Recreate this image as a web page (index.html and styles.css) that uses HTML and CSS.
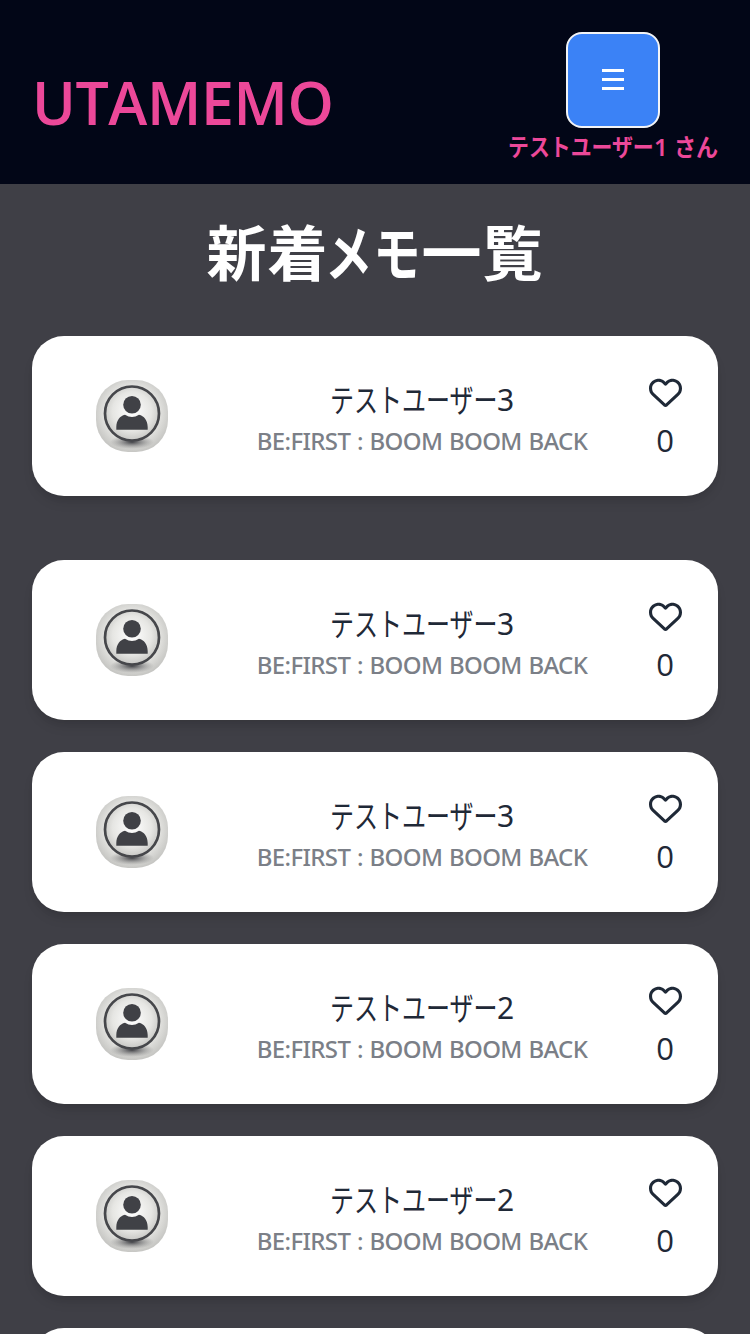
FILE: index.html
```
<!DOCTYPE html>
<html lang="ja">
<head>
<meta charset="utf-8">
<title>UTAMEMO</title>
<link rel="stylesheet" href="styles.css">
</head>
<body>
<svg class="defs" aria-hidden="true">
  <defs>
    <radialGradient id="disc" cx=".5" cy=".46" r=".6"><stop offset="0" stop-color="#fff"/><stop offset=".6" stop-color="#e6e6e3"/><stop offset="1" stop-color="#bdbdba"/></radialGradient>
    <radialGradient id="shade"><stop offset="0" stop-color="#404146"/><stop offset="1" stop-color="#808080" stop-opacity="0"/></radialGradient>
    <symbol id="avatar" viewBox="0 0 72 72">
      <rect width="72" height="72" fill="url(#disc)"/>
      <ellipse cx="36" cy="62" rx="22" ry="7" fill="url(#shade)"/>
      <circle cx="36" cy="33.500" r="27" fill="url(#disc)" stroke="#46474b" stroke-width="2.700"/>
      <circle cx="36" cy="24.700" r="8.800" fill="#404146"/>
      <path d="M20.300 49.700V47C20.500 40 24 36 29 34.700Q36 39.500 43 34.700C48 36 51.500 40 51.700 47V49.700Z" fill="#404146"/>
    </symbol>
    <symbol id="heart" viewBox="0 0 512 512">
      <path fill="currentColor" d="M225.8 468.2l-2.5-2.3L48.1 303.2C17.4 274.7 0 234.7 0 192.8v-3.300c0-70.400 50-130.800 119.200-144C158.600 37.900 198.900 47 231 69.600c9 6.400 17.400 13.800 25 22.300c4.200-4.800 8.700-9.200 13.500-13.300c3.700-3.200 7.500-6.200 11.500-9C313.100 47 353.400 37.900 392.800 45.400C462 58.600 512 119.100 512 189.500v3.300c0 41.900-17.400 81.900-48.100 110.400L288.700 465.900l-2.500 2.300c-8.200 7.600-19 11.900-30.200 11.900s-22-4.200-30.200-11.900zM239.100 145c-.4-.3-.7-.7-1-1.100l-17.800-20c-23.100-25.900-58-37.700-92-31.200C81.600 101.500 48 142.100 48 189.500v3.300c0 28.500 11.900 55.800 32.800 75.200L256 430.700 431.200 268c20.900-19.400 32.800-46.700 32.800-75.200v-3.300c0-47.300-33.600-88-80.100-96.900c-34-6.500-69 5.400-92 31.200l-17.900 20.200c-.3.4-.7.7-1 1.100c-4.500 4.500-10.600 7-16.900 7s-12.400-2.500-16.900-7z"/>
    </symbol>
  </defs>
</svg>
<header class="header">
  <h1 class="logo">UTAMEMO</h1>
  <div class="account">
    <button class="menu" aria-label="menu"><svg width="22" height="22" viewBox="0 0 22 22"><path d="M0 1.500H22M0 10.500H22M0 19.500H22" stroke="#fff" stroke-width="3"/></svg></button>
    <div class="greeting"><span class="kana">テストユーザー</span><span class="digit">1</span><span class="suffix">さん</span></div>
  </div>
</header>
<main class="main">
  <h2 class="title"><span>新着</span><span class="title-kana">メモ</span><span>一覧</span></h2>
  <section class="list">
    <article class="card featured"><svg class="avatar"><use href="#avatar"/></svg><div class="info"><div class="name"><span class="kana">テストユーザー</span><span class="digit">3</span></div><div class="song">BE:FIRST : BOOM BOOM BACK</div></div><div class="likes"><svg class="heart"><use href="#heart"/></svg><span class="count">0</span></div></article>
    <article class="card"><svg class="avatar"><use href="#avatar"/></svg><div class="info"><div class="name"><span class="kana">テストユーザー</span><span class="digit">3</span></div><div class="song">BE:FIRST : BOOM BOOM BACK</div></div><div class="likes"><svg class="heart"><use href="#heart"/></svg><span class="count">0</span></div></article>
    <article class="card"><svg class="avatar"><use href="#avatar"/></svg><div class="info"><div class="name"><span class="kana">テストユーザー</span><span class="digit">3</span></div><div class="song">BE:FIRST : BOOM BOOM BACK</div></div><div class="likes"><svg class="heart"><use href="#heart"/></svg><span class="count">0</span></div></article>
    <article class="card"><svg class="avatar"><use href="#avatar"/></svg><div class="info"><div class="name"><span class="kana">テストユーザー</span><span class="digit">2</span></div><div class="song">BE:FIRST : BOOM BOOM BACK</div></div><div class="likes"><svg class="heart"><use href="#heart"/></svg><span class="count">0</span></div></article>
    <article class="card"><svg class="avatar"><use href="#avatar"/></svg><div class="info"><div class="name"><span class="kana">テストユーザー</span><span class="digit">2</span></div><div class="song">BE:FIRST : BOOM BOOM BACK</div></div><div class="likes"><svg class="heart"><use href="#heart"/></svg><span class="count">0</span></div></article>
    <article class="card"></article>
  </section>
</main>
</body>
</html>
```
FILE: styles.css
```
* { box-sizing: border-box; }
body { margin: 0; height: 1334px; overflow: hidden; background: #3f3f46; color: #1f2937; font-family: "Noto Sans", "Noto Sans CJK JP", sans-serif; }
.defs { display: block; width: 0; height: 0; }
.header { height: 184px; padding: 32px; display: flex; justify-content: space-between; background: #020617; color: #ec4899; }
.logo { margin: 38px 0 0; font-family: "Open Sans", "Noto Sans", sans-serif; font-size: 59px; line-height: 64px; font-weight: 600; letter-spacing: -.4px; white-space: nowrap; }
.account { width: 210px; display: flex; flex-direction: column; align-items: center; }
.menu { width: 94px; height: 96px; flex: none; padding: 0; border: 2px solid #f3f4f6; border-radius: 16px; background: #3b82f6; display: flex; align-items: center; justify-content: center; }
.menu svg { display: block; }
.greeting { display: flex; width: 210px; height: 40px; line-height: 38px; font-size: 24px; font-weight: 600; white-space: nowrap; }
.kana, .suffix { transform: scaleX(.87); transform-origin: left; }
.greeting .kana { width: 146px; }
.greeting .digit { width: 20px; }
.suffix { width: 42px; transform: scaleX(.92); }
.main { height: 1150px; padding: 32px 32px 0; overflow: hidden; }
.title { height: 72px; margin: 0; display: flex; justify-content: center; color: #fff; font-size: 60px; font-weight: 700; line-height: 75px; letter-spacing: 1px; white-space: nowrap; }
.title-kana { width: 93px; transform: translateX(-4px) scaleX(.79); transform-origin: left; }
.list { margin-top: 48px; display: flex; flex-direction: column; gap: 32px; }
.card { height: 160px; flex: none; padding: 0 36px 0 64px; display: flex; align-items: center; justify-content: space-between; background: #fff; border-radius: 32px; box-shadow: 0 8px 12px -2px rgba(0,0,0,.1), 0 4px 8px -4px rgba(0,0,0,.1); }
.featured { margin-bottom: 32px; }
.avatar { width: 72px; height: 72px; border-radius: 32px; }
.info { width: 360px; margin-left: 28px; padding-top: 1px; text-align: center; white-space: nowrap; }
.name { display: flex; justify-content: center; height: 46px; line-height: 46px; font-size: 32px; }
.name .kana { width: 167px; transform: scaleX(.75); }
.name .digit { width: 17px; font-size: 30px; }
.song { height: 34px; line-height: 35px; font-size: 24px; font-weight: 500; color: #7b7f87; letter-spacing: -.65px; word-spacing: 1.1px; }
.likes { width: 34px; display: flex; flex-direction: column; align-items: center; font-size: 31px; }
.heart { width: 33px; height: 33px; }
.count { line-height: 46px; margin-top: 8px; margin-bottom: -7px; font-family: "Open Sans", sans-serif; }
```
